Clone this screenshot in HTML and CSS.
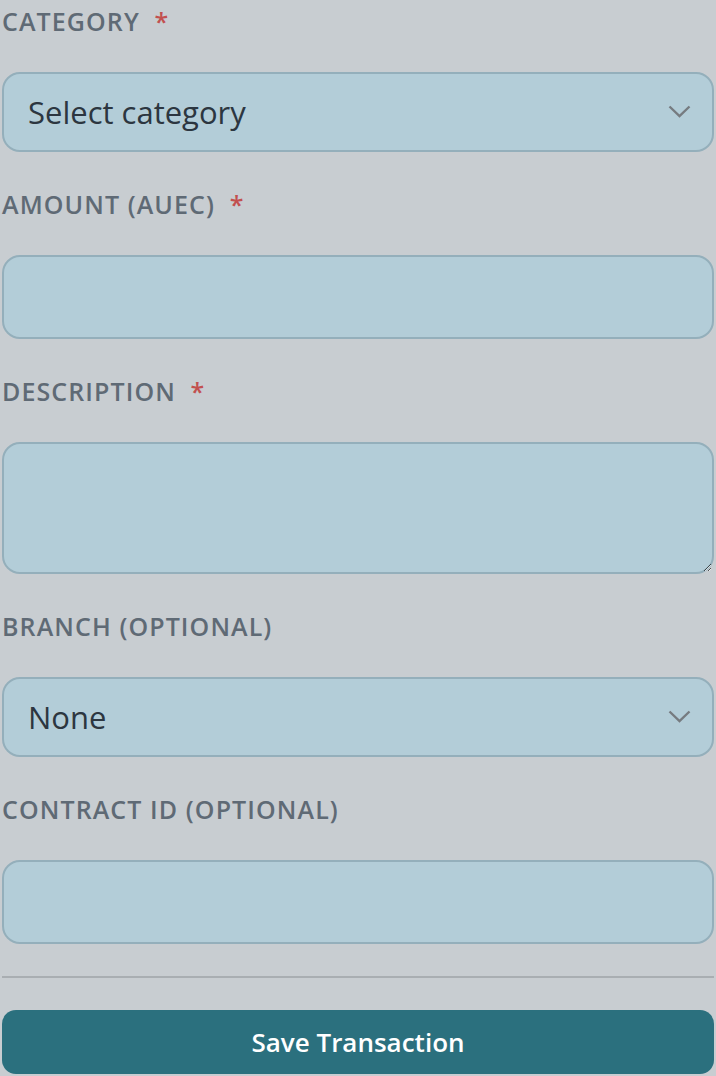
FILE: index.html
```html
<!DOCTYPE html>
<html lang="en">
<head>
<meta charset="utf-8">
<title>New Transaction</title>
<link rel="stylesheet" href="styles.css">
</head>
<body>
<form class="form">
  <div class="field">
    <label class="label" for="category">CATEGORY <span class="req">*</span></label>
    <div class="select-wrap">
      <select id="category" class="control select">
        <option>Select category</option>
      </select>
      <svg class="chevron" width="23" height="13" viewBox="0 0 23 13" aria-hidden="true"><path d="M1.5 1.5 L11.5 11 L21.5 1.5" fill="none" stroke="#767b80" stroke-width="2.4"/></svg>
    </div>
  </div>
  <div class="field">
    <label class="label" for="amount">AMOUNT (AUEC) <span class="req">*</span></label>
    <input id="amount" class="control input" type="text">
  </div>
  <div class="field">
    <label class="label" for="desc">DESCRIPTION <span class="req">*</span></label>
    <textarea id="desc" class="control textarea"></textarea>
  </div>
  <div class="field">
    <label class="label" for="branch">BRANCH (OPTIONAL)</label>
    <div class="select-wrap">
      <select id="branch" class="control select">
        <option>None</option>
      </select>
      <svg class="chevron" width="23" height="13" viewBox="0 0 23 13" aria-hidden="true"><path d="M1.5 1.5 L11.5 11 L21.5 1.5" fill="none" stroke="#767b80" stroke-width="2.4"/></svg>
    </div>
  </div>
  <div class="field last">
    <label class="label" for="contract">CONTRACT ID (OPTIONAL)</label>
    <input id="contract" class="control input" type="text">
  </div>
  <hr class="divider">
  <button type="button" class="save">Save Transaction</button>
</form>
</body>
</html>
```

FILE: styles.css
```css
html, body {
  margin: 0;
  background: #c8cdd1;
}
body {
  padding: 3px 2px 0;
  font-family: "Open Sans", "Noto Sans", sans-serif;
}
.form {
  display: flex;
  flex-direction: column;
}
.field {
  display: flex;
  flex-direction: column;
  margin-bottom: 34px;
}
.field.last {
  margin-bottom: 0;
}
.label {
  font-size: 25px;
  line-height: 36px;
  font-weight: 600;
  letter-spacing: 1.1px;
  color: #5f6a75;
  margin-bottom: 33px;
}
.req {
  color: #c2504f;
  margin-left: 7px;
}
.control {
  box-sizing: border-box;
  width: 100%;
  margin: 0;
  background: #b3cdd8;
  border: 2px solid #94afbb;
  border-radius: 18px;
  font-family: "Open Sans", "Noto Sans", sans-serif;
  font-size: 31px;
  color: #2c3640;
  outline: none;
}
.select-wrap {
  position: relative;
}
.select {
  appearance: none;
  -webkit-appearance: none;
  height: 80px;
  padding: 0 60px 0 24px;
}
.chevron {
  position: absolute;
  right: 23px;
  top: 33px;
  pointer-events: none;
}
.input {
  height: 84px;
  padding: 0 24px;
}
.textarea {
  display: block;
  height: 132px;
  padding: 16px 24px;
  resize: vertical;
}
.divider {
  border: 0;
  height: 2px;
  background: #a9aeb2;
  margin: 32px 0 32px;
}
.save {
  height: 64px;
  border: 0;
  border-radius: 14px;
  background: #2b707e;
  color: #ffffff;
  font-family: "Open Sans", "Noto Sans", sans-serif;
  font-size: 26px;
  font-weight: 600;
  width: 100%;
}
```
